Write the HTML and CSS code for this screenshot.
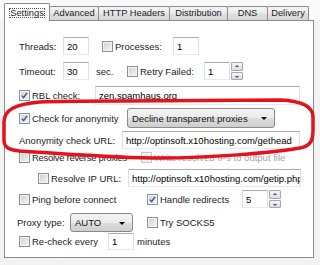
FILE: index.html
```html
<!doctype html>
<html lang="en">
<head>
  <meta charset="utf-8">
  <title>Settings</title>
  <link rel="stylesheet" href="styles.css">
</head>
<body>
  <div class="window">
    <div class="tabs">
      <div class="tab active w-settings"><span class="focus">Settings</span></div>
      <div class="tab w-advanced">Advanced</div>
      <div class="tab w-http">HTTP Headers</div>
      <div class="tab w-distribution">Distribution</div>
      <div class="tab w-dns">DNS</div>
      <div class="tab w-delivery">Delivery</div>
    </div>

    <div class="panel">
      <div class="row r1">
        <span class="label lbl-threads">Threads:</span>
        <span class="input w26">20</span>
        <span class="cb ml13"></span>
        <span class="label lbl-processes">Processes:</span>
        <span class="input w26">1</span>
      </div>

      <div class="row r2">
        <span class="label lbl-threads">Timeout:</span>
        <span class="input w26">30</span>
        <span class="label lbl-sec">sec.</span>
        <span class="cb"></span>
        <span class="label lbl-retry">Retry Failed:</span>
        <span class="input w26">1</span>
        <span class="spin"><span class="up"></span><span class="down"></span></span>
      </div>

      <div class="row r3">
        <span class="cb checked"><svg viewBox="0 0 11 11"><path d="M2.3 5.6 L4.4 8.2 L8.6 2.4"/></svg></span>
        <span class="label lbl-rbl">RBL check:</span>
        <span class="input w-rbl">zen.spamhaus.org</span>
      </div>

      <div class="row r4">
        <span class="cb checked"><svg viewBox="0 0 11 11"><path d="M2.3 5.6 L4.4 8.2 L8.6 2.4"/></svg></span>
        <span class="label lbl-anon">Check for anonymity</span>
        <span class="select w-decline">Decline transparent proxies</span>
      </div>

      <div class="row r5">
        <span class="label lbl-anonurl">Anonymity check URL:</span>
        <span class="input w-anonurl">http://optinsoft.x10hosting.com/gethead</span>
      </div>

      <div class="row r6">
        <span class="cb"></span>
        <span class="label lbl-reverse">Resolve reverse proxies</span>
        <span class="cb disabled"></span>
        <span class="label muted">Write resolved IPs to output file</span>
      </div>

      <div class="row r7">
        <span class="cb ml19"></span>
        <span class="label lbl-resolveip">Resolve IP URL:</span>
        <span class="input w-ipurl">http://optinsoft.x10hosting.com/getip.php</span>
      </div>

      <div class="row r8">
        <span class="cb"></span>
        <span class="label lbl-ping">Ping before connect</span>
        <span class="cb checked"><svg viewBox="0 0 11 11"><path d="M2.3 5.6 L4.4 8.2 L8.6 2.4"/></svg></span>
        <span class="label lbl-redirects">Handle redirects</span>
        <span class="input w26">5</span>
        <span class="spin ml2"><span class="up"></span><span class="down"></span></span>
      </div>

      <div class="row r9">
        <span class="label lbl-proxytype">Proxy type:</span>
        <span class="select w-auto">AUTO</span>
        <span class="cb ml14"></span>
        <span class="label">Try SOCKS5</span>
      </div>

      <div class="row r10">
        <span class="cb"></span>
        <span class="label lbl-recheck">Re-check every</span>
        <span class="input w26">1</span>
        <span class="label ml3">minutes</span>
      </div>
    </div>

    <svg class="mark" viewBox="0 0 320 265" width="320" height="265">
      <path d="M40,102 C15,104 4,110 4,122 L4,140 C4,147 8,150 20,151 C70,154 120,158 160,158 C210,158 270,153 300,148 C311,146 313,140 313,130 L313,117 C313,108 305,101 280,100 L120,101 C90,101 60,101 40,102 Z"/>
    </svg>
  </div>
</body>
</html>
```

FILE: styles.css
```css
body {
  margin: 0;
}
.window {
  position: relative;
  width: 320px;
  height: 265px;
  overflow: hidden;
  background: #f3f3f3;
  font-family: "Liberation Sans", Arial, sans-serif;
  font-size: 9.5px;
  color: #1c1c24;
}

/* tabs */
.tabs {
  display: flex;
  align-items: flex-end;
  height: 20px;
  padding-left: 4px;
  background: #fafafa;
}
.tab {
  box-sizing: border-box;
  height: 14px;
  margin-left: -1px;
  border: 1px solid #898c95;
  border-bottom: none;
  border-radius: 2px 2px 0 0;
  background: linear-gradient(#f5f5f5, #ebebeb 45%, #dedede 55%, #d6d6d6);
  text-align: center;
  line-height: 13px;
  font-size: 9.3px;
}
.tab.active {
  position: relative;
  z-index: 1;
  height: 18px;
  margin-left: 0;
  margin-bottom: -1px;
  background: #fff;
  line-height: 18px;
}
.focus {
  padding: 0 1px;
  outline: 1px dotted #555;
  outline-offset: -1px;
}
.w-settings { width: 46px; }
.w-advanced { width: 50px; }
.w-http { width: 72px; }
.w-distribution { width: 59px; }
.w-dns { width: 41px; }
.w-delivery { width: 42px; }

/* panel */
.panel {
  box-sizing: border-box;
  width: 310px;
  height: 238px;
  margin-left: 4px;
  padding: 16px 0 0 14px;
  border: 1px solid #898c95;
  background: #fff;
}
.row {
  display: flex;
  align-items: center;
  white-space: nowrap;
}
.r1 { height: 18px; }
.r2 { height: 18px; margin-top: 7px; }
.r3 { height: 19px; margin-top: 6px; }
.r4 { height: 20px; margin-top: 3px; }
.r5 { height: 18px; margin-top: 3px; }
.r6 { height: 14px; margin-top: 1px; }
.r7 { height: 18px; margin-top: 5px; }
.r8 { height: 18px; margin-top: 3px; }
.r9 { height: 19px; margin-top: 5px; }
.r10 { height: 17px; margin-top: 1px; }

.label {
  flex: none;
}
.muted { color: #a3a3a3; }
.lbl-threads { width: 44px; }
.lbl-processes { width: 58px; }
.lbl-sec { width: 31px; margin-left: 7px; }
.lbl-retry { width: 64px; }
.lbl-rbl { width: 63px; }
.lbl-anon { width: 95px; }
.lbl-anonurl { width: 103px; }
.lbl-reverse { width: 109px; letter-spacing: -0.3px; }
.lbl-resolveip { width: 77px; }
.lbl-ping { width: 115px; }
.lbl-redirects { width: 82px; }
.lbl-proxytype { width: 53px; margin-left: -2px; }
.lbl-recheck { width: 76px; }

.ml2 { margin-left: 2px; }
.ml3 { margin-left: 3px; }
.ml13 { margin-left: 13px; }
.ml14 { margin-left: 14px; }
.ml19 { margin-left: 19px; }

/* text boxes */
.input {
  box-sizing: border-box;
  flex: none;
  height: 100%;
  padding-left: 3px;
  overflow: hidden;
  border: 1px solid #dbdfe6;
  border-top-color: #abadb3;
  border-bottom-color: #e3e9ef;
  background: #fff;
  color: #000;
  display: flex;
  align-items: center;
}
.w26 { width: 26px; }
.w-rbl { width: 205px; }
.w-anonurl { width: 178px; }
.w-ipurl { width: 173px; }

/* checkboxes */
.cb {
  box-sizing: border-box;
  flex: none;
  width: 11px;
  height: 11px;
  margin-right: 2px;
  border: 1px solid #8e8f8f;
  background: linear-gradient(135deg, #cdd1d6, #f4f4f4);
  box-shadow: inset 0 0 0 1px #f4f4f4;
}
.cb svg {
  display: block;
  width: 9px;
  height: 9px;
}
.cb path {
  fill: none;
  stroke: #3a5696;
  stroke-width: 1.7;
}
.cb.disabled {
  border-color: #c6c6c6;
  background: #f4f4f4;
}

/* drop-down lists */
.select {
  position: relative;
  box-sizing: border-box;
  flex: none;
  height: 100%;
  padding-left: 4px;
  border: 1px solid #8a8a8a;
  border-radius: 3px;
  background: linear-gradient(#f4f4f4, #ebebeb 50%, #dddddd 51%, #cfcfcf);
  display: flex;
  align-items: center;
  color: #111;
}
.select::after {
  content: "";
  position: absolute;
  right: 7px;
  top: 50%;
  margin-top: -1px;
  border: 3px solid transparent;
  border-top: 3px solid #000;
  border-bottom: none;
}
.w-decline { width: 148px; }
.w-auto { width: 63px; }

/* spin buttons */
.spin {
  display: flex;
  flex-direction: column;
  gap: 1px;
  margin-left: 1px;
  width: 12px;
  height: 100%;
}
.spin span {
  position: relative;
  flex: 1;
  box-sizing: border-box;
  border: 1px solid #a5a8ad;
  border-radius: 1px;
  background: linear-gradient(#f6f6f6, #dcdcdc);
}
.spin span::after {
  content: "";
  position: absolute;
  left: 3px;
  top: 2px;
  border: 2px solid transparent;
}
.spin .up::after {
  border-bottom: 2px solid #3d4f73;
  border-top: none;
}
.spin .down::after {
  border-top: 2px solid #3d4f73;
  border-bottom: none;
  top: 3px;
}

/* hand-drawn highlight */
.mark {
  position: absolute;
  left: 0;
  top: 0;
  pointer-events: none;
}
.mark path {
  fill: none;
  stroke: #e3121c;
  stroke-width: 3.5;
  stroke-linejoin: round;
}
```
